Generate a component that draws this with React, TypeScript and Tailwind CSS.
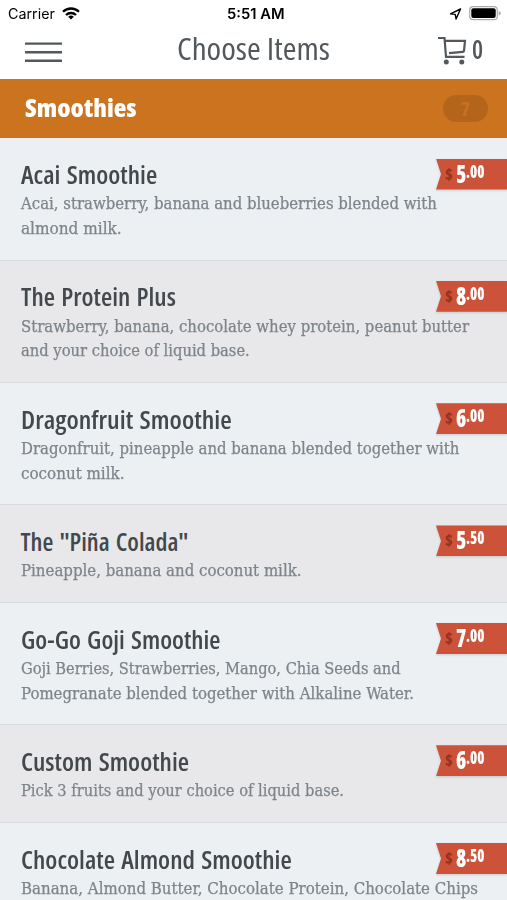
import React, { useLayoutEffect, useRef, useState } from 'react';

type Line = [text: string, width: number];

type MenuItem = {
  title: Line;
  lines: Line[];
  dollars: string;
  cents: string;
};

const items: MenuItem[] = [
  {
    title: ['Acai Smoothie', 136],
    lines: [['Acai, strawberry, banana and blueberries blended with', 415.5], ['almond milk.', 101]],
    dollars: '5',
    cents: '.00',
  },
  {
    title: ['The Protein Plus', 155],
    lines: [['Strawberry, banana, chocolate whey protein, peanut butter', 448], ['and your choice of liquid base.', 229]],
    dollars: '8',
    cents: '.00',
  },
  {
    title: ['Dragonfruit Smoothie', 210.5],
    lines: [['Dragonfruit, pineapple and banana blended together with', 438], ['coconut milk.', 104]],
    dollars: '6',
    cents: '.00',
  },
  {
    title: ['The "Piña Colada"', 168],
    lines: [['Pineapple, banana and coconut milk.', 281]],
    dollars: '5',
    cents: '.50',
  },
  {
    title: ['Go-Go Goji Smoothie', 199],
    lines: [['Goji Berries, Strawberries, Mango, Chia Seeds and', 380], ['Pomegranate blended together with Alkaline Water.', 393]],
    dollars: '7',
    cents: '.00',
  },
  {
    title: ['Custom Smoothie', 168],
    lines: [['Pick 3 fruits and your choice of liquid base.', 323]],
    dollars: '6',
    cents: '.00',
  },
  {
    title: ['Chocolate Almond Smoothie', 271],
    lines: [['Banana, Almond Butter, Chocolate Protein, Chocolate Chips', 457]],
    dollars: '8',
    cents: '.50',
  },
];

type FitTextProps = { text: string; width: number; className?: string };

// Condenses a single line of text to the given width.
const FitText: React.FC<FitTextProps> = ({ text, width, className = '' }) => {
  const ref = useRef<HTMLSpanElement>(null);
  const [scale, setScale] = useState(1);

  useLayoutEffect(() => {
    if (ref.current) setScale(width / ref.current.offsetWidth);
  }, [text, width]);

  return (
    <span className="block" style={{ width }}>
      <span
        ref={ref}
        className={`block w-max origin-left whitespace-pre ${className}`}
        style={{ transform: `scaleX(${scale})` }}
      >
        {text}
      </span>
    </span>
  );
};

const StatusBar: React.FC = () => (
  <div className="grid h-[27px] grid-cols-3 items-center pl-[8px] pr-[6px] font-['Inter'] text-black">
    <div className="flex items-center gap-[7px]">
      <FitText text="Carrier" width={47} className="text-[14px] leading-[27px]" />
      <svg width="18" height="13" viewBox="0 0 18 13" fill="none" stroke="black" strokeWidth="2.3">
        <path d="M1 4.8C5.5.4 12.5.4 17 4.8" />
        <path d="M4 8c2.8-2.7 7.2-2.7 10 0" />
        <path d="M9 12.5 6.2 9.7q2.8-2.3 5.6 0z" fill="black" stroke="none" />
      </svg>
    </div>
    <div className="flex justify-center pl-[4px]">
      <FitText text="5:51 AM" width={58} className="text-[14px] font-semibold leading-[27px]" />
    </div>
    <div className="flex items-center justify-end gap-[7px]">
      <svg width="13" height="12" viewBox="0 0 13 12" fill="none" stroke="black" strokeWidth="1.4" strokeLinejoin="round">
        <path d="M11.5 1 1.5 5.8l4.7.6.9 4.6z" />
      </svg>
      <svg width="32" height="15" viewBox="0 0 32 15">
        <rect x=".7" y=".7" width="27.6" height="13" rx="3.5" fill="none" stroke="#aaa" strokeWidth="1.2" />
        <rect x="2.3" y="2.3" width="24.4" height="9.8" rx="2" />
        <path d="M29.7 5v4.5q2-.8 2-2.25T29.7 5z" fill="#aaa" />
      </svg>
    </div>
  </div>
);

const NavBar: React.FC = () => (
  <div className="flex h-[52px] items-start justify-between pl-[25px] pr-[24px] font-['Open_Sans'] font-stretch-75% text-[#53585c]">
    <svg className="mt-[13px]" width="37" height="24" viewBox="0 0 37 24" stroke="#53585c" strokeWidth="2.4">
      <path d="M0 3.6h37M0 12.2h37M0 20.8h37" />
    </svg>
    <div className="ml-[7px]">
      <FitText text="Choose Items" width={153} className="text-[31px] leading-[43px]" />
    </div>
    <div className="flex items-start gap-[5px]">
      <svg className="mt-[9px]" width="29" height="29" viewBox="0 0 29 29" fill="none" stroke="#53585c" strokeWidth="2.2">
        <path d="M0 2h6.5L8 20.8h18.500M7 4.800h20l-1 10q-.2 1-1.200 1.100l-13.800 1.300" />
        <circle cx="8.300" cy="26" r="2.500" fill="#53585c" stroke="none" />
        <circle cx="23.800" cy="26" r="2.500" fill="#53585c" stroke="none" />
      </svg>
      <FitText text="0" width={11} className="text-[27px] font-semibold leading-[43px]" />
    </div>
  </div>
);

const SectionHeader: React.FC = () => (
  <div className="flex h-[58.6px] items-center justify-between bg-[#cb731e] pl-[25px] pr-[19px] font-['Open_Sans'] font-bold font-stretch-75%">
    <FitText text="Smoothies" width={112} className="pb-[2px] text-[25px] font-extrabold leading-[56px] text-white" />
    <div className="flex h-[27px] w-[45px] items-center justify-center rounded-full bg-[#b4651b]">
      <FitText text="7" width={9} className="text-[20px] font-extrabold leading-[27px] text-[#c6711f]" />
    </div>
  </div>
);

const PriceTag: React.FC<{ dollars: string; cents: string }> = ({ dollars, cents }) => (
  <div className="mt-[20px] h-[32px] w-[71px] shrink-0 drop-shadow-[0_1px_1px_rgba(0,0,0,0.15)]">
    <div className="flex h-[31px] items-start bg-[#cc5239] pl-[9px] font-['Open_Sans'] font-extrabold font-stretch-75% text-white [clip-path:polygon(0_0,100%_0,100%_100%,0_100%,5px_50%)]">
      <FitText text="$" width={8} className="text-[16px] leading-[31px] text-[#963420]" />
      <div className="w-[3px]" />
      <FitText text={dollars} width={10} className="text-[25px] leading-[29px]" />
      <FitText text={cents} width={18} className="text-[17px] leading-[25px]" />
    </div>
  </div>
);

const ItemRow: React.FC<{ item: MenuItem }> = ({ item }) => (
  <div className="border-b border-[#d9dadd] bg-[#edf0f2] pb-[18.2px] even:bg-[#e8e8ea]">
    <div className="flex h-[53.9px] justify-between pl-[20.5px]">
      <FitText
        text={item.title[0]}
        width={item.title[1]}
        className="pt-[18.5px] font-['Open_Sans'] text-[25px] font-semibold leading-[34px] [word-spacing:1.5px] font-stretch-75% text-[#43484c]"
      />
      <PriceTag dollars={item.dollars} cents={item.cents} />
    </div>
    <div className="pl-[20.5px]">
      {item.lines.map(([text, width]) => (
        <FitText
          key={text}
          text={text}
          width={width}
          className="font-['DejaVu_Serif'] text-[16px] leading-[24.6px] font-stretch-75% text-[#7d848b] [-webkit-text-stroke:0.25px_#7d848b]"
        />
      ))}
    </div>
  </div>
);

export default function App() {
  return (
    <div className="h-[900px] w-[507px] overflow-hidden bg-white">
      <StatusBar />
      <NavBar />
      <SectionHeader />
      <div className="bg-[#edf0f2] pt-[1px]">
        {items.map((item) => (
          <ItemRow key={item.title[0]} item={item} />
        ))}
      </div>
    </div>
  );
}
